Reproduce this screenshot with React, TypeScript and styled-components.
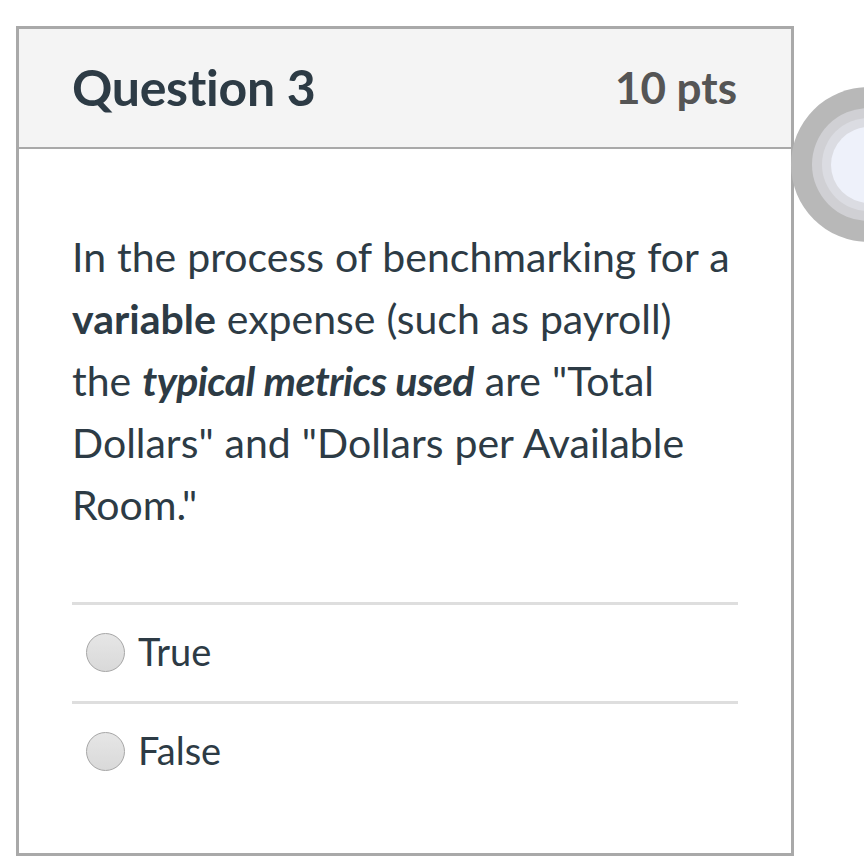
import React from "react";
import styled, { createGlobalStyle } from "styled-components";

const Global = createGlobalStyle`
  html, body { margin: 0; padding: 0; background: #ffffff; overflow: hidden; }
  body { font-family: Lato, "Open Sans", sans-serif; color: #2d3b45; }
`;

const Page = styled.div`
  position: relative;
  width: 864px;
  height: 864px;
  overflow: hidden;
  padding: 26px 0 0 16px;
  box-sizing: border-box;
`;

const Card = styled.section`
  width: 778px;
  height: 830px;
  box-sizing: border-box;
  border: 3px solid #a9a9a9;
  display: flex;
  flex-direction: column;
  background: #fff;
`;

const Header = styled.header`
  height: 120px;
  box-sizing: border-box;
  background: #f4f4f4;
  border-bottom: 2px solid #a9a9a9;
  display: flex;
  align-items: center;
  justify-content: space-between;
  padding: 0 54px 2px 53px;
`;

const Title = styled.h2`
  margin: 0;
  font-family: Lato, sans-serif;
  font-weight: 700;
  font-size: 50px;
  color: #2d3b45;
  letter-spacing: -0.3px;
`;

const Points = styled.span`
  font-family: Lato, sans-serif;
  font-weight: 700;
  font-size: 44px;
  color: #555555;
`;

const Body = styled.div`
  padding: 77px 53px 0 53px;
  display: flex;
  flex-direction: column;
`;

const Prompt = styled.p`
  margin: 0;
  font-size: 41px;
  line-height: 62px;
  word-spacing: 0.5px;
  color: #2d3b45;
`;

const Strong = styled.strong`
  font-weight: 700;
`;

const Emph = styled.em`
  font-weight: 700;
  font-style: italic;
  letter-spacing: -0.6px;
`;

const Answers = styled.div`
  margin-top: 66px;
  display: flex;
  flex-direction: column;
`;

const Answer = styled.label`
  display: flex;
  align-items: center;
  gap: 13px;
  height: 99px;
  box-sizing: border-box;
  padding: 0 0 5px 14px;
  border-top: 3px solid #dedede;
  font-size: 38px;
  color: #2d3b45;
`;

const Radio = styled.span`
  width: 37px;
  height: 37px;
  margin-top: 3px;
  border-radius: 50%;
  border: 1px solid #a6a6a6;
  background: linear-gradient(#e6e6e6, #d9d9d9);
  box-sizing: content-box;
  flex: none;
`;

const Knob = styled.div`
  position: absolute;
  left: 791px;
  top: 87px;
  width: 155px;
  height: 155px;
  border-radius: 50%;
  background: #b8b8b8;
  display: flex;
  align-items: center;
  justify-content: center;
`;

const Ring = styled.div<{ $size: number; $color: string }>`
  width: ${(p) => p.$size}px;
  height: ${(p) => p.$size}px;
  border-radius: 50%;
  background: ${(p) => p.$color};
  display: flex;
  align-items: center;
  justify-content: center;
  flex: none;
`;

export default function App() {
  return (
    <>
      <Global />
      <Page>
        <Card>
          <Header>
            <Title>Question 3</Title>
            <Points>10 pts</Points>
          </Header>
          <Body>
            <Prompt>
              In the process of benchmarking for a <Strong>variable</Strong> expense (such as payroll) the{" "}
              <Emph>typical metrics used</Emph> are "Total Dollars" and "Dollars per Available Room."
            </Prompt>
            <Answers>
              <Answer>
                <Radio />
                True
              </Answer>
              <Answer>
                <Radio />
                False
              </Answer>
            </Answers>
          </Body>
        </Card>
        <Knob>
          <Ring $size={113} $color="#d0d0d4">
            <Ring $size={93} $color="#dbdce2">
              <Ring $size={76} $color="#eef1fa" />
            </Ring>
          </Ring>
        </Knob>
      </Page>
    </>
  );
}
